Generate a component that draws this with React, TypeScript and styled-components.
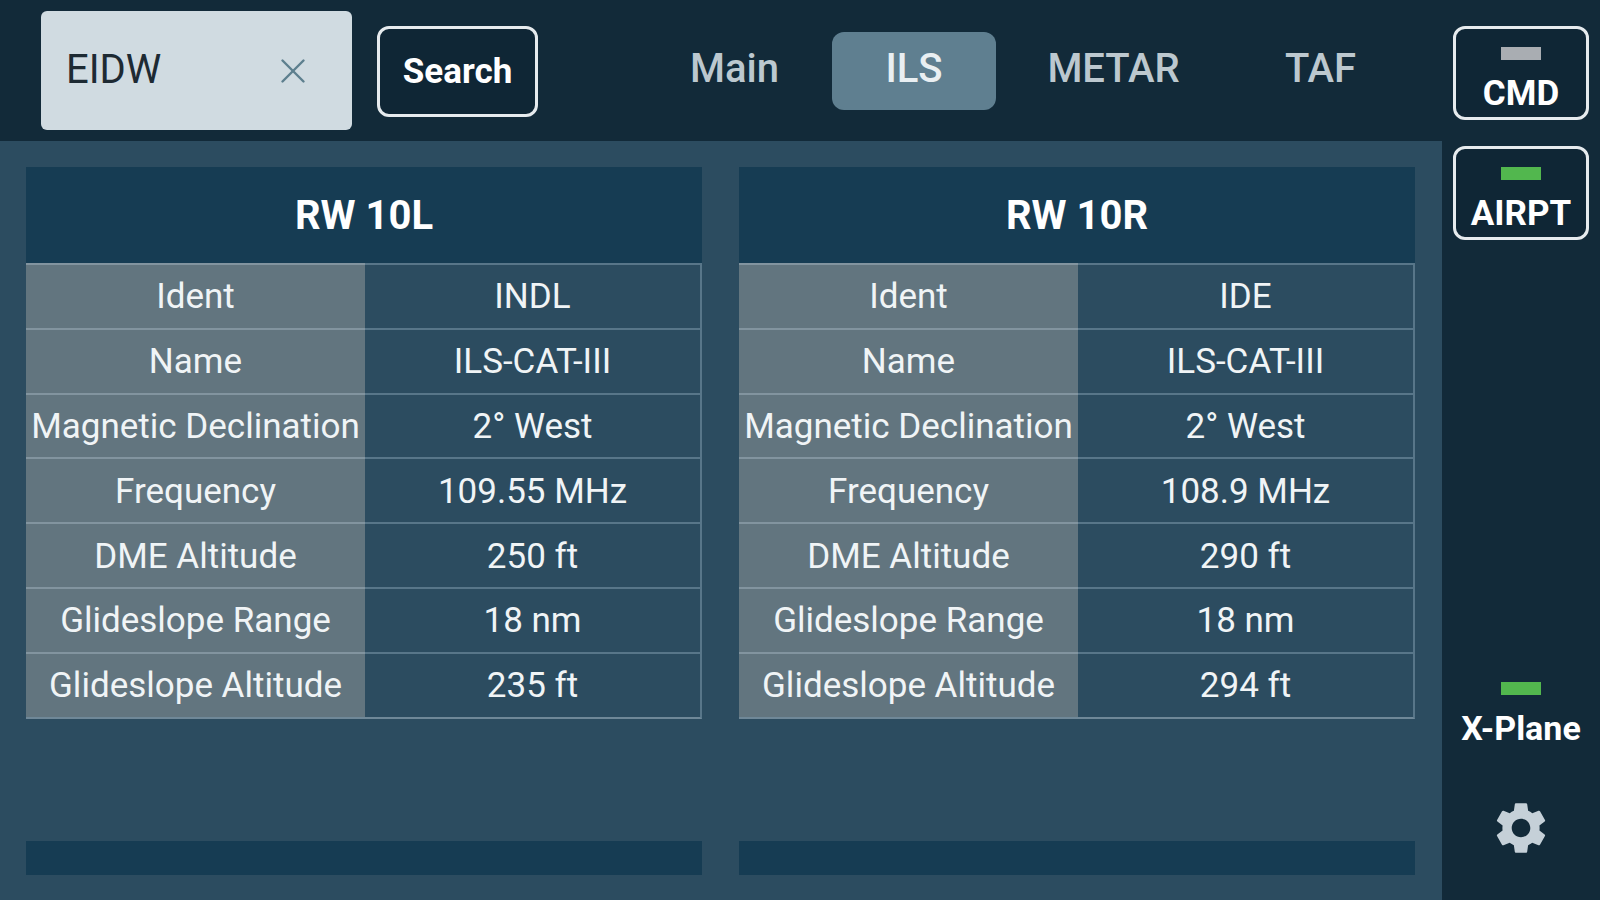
import React from "react";
import styled, { createGlobalStyle } from "styled-components";
import { X } from "lucide-react";
import { MdSettings } from "react-icons/md";

const GlobalStyle = createGlobalStyle`
  html, body {
    margin: 0;
    padding: 0;
    height: 100%;
    overflow: hidden;
    background: #2c4c60;
    font-family: Roboto, "Liberation Sans", sans-serif;
  }
  #root { height: 100%; }
`;

const Screen = styled.div`
  display: grid;
  grid-template-columns: 1442px 158px;
  width: 1600px;
  height: 900px;
`;

const Main = styled.div`
  display: flex;
  flex-direction: column;
  min-width: 0;
`;

const Header = styled.header`
  display: flex;
  align-items: flex-start;
  height: 141px;
  box-sizing: border-box;
  padding: 11px 0 0 41px;
  background: #122a39;
`;

const SearchField = styled.div`
  display: flex;
  align-items: center;
  justify-content: space-between;
  box-sizing: border-box;
  width: 311px;
  height: 119px;
  padding: 0 38px 0 25px;
  border-radius: 6px;
  background: #d0dbe1;
  color: #1d2a33;
  font-size: 40px;
  line-height: 1;
`;

const FieldText = styled.span`
  margin-top: -2px;
`;

const ClearIcon = styled(X)`
  color: #5d7f8e;
`;

const OutlineButton = styled.button`
  box-sizing: border-box;
  border: 3px solid #e6ebee;
  border-radius: 12px;
  background: #0f2635;
  color: #fff;
  font-family: inherit;
  font-weight: 700;
  padding: 0;
`;

const SearchButton = styled(OutlineButton)`
  width: 161px;
  height: 91px;
  margin: 15px 0 0 25px;
  font-size: 35px;
`;

const Tabs = styled.nav`
  display: grid;
  grid-template-columns: 195px 164px 235px 179px;
  margin: 21px 0 0 99px;
`;

const Tab = styled.div<{ $active?: boolean }>`
  display: flex;
  align-items: center;
  justify-content: center;
  height: 78px;
  padding-bottom: 6px;
  box-sizing: border-box;
  border-radius: 12px;
  font-size: 40px;
  font-weight: 500;
  color: ${(p) => (p.$active ? "#e9eff2" : "#bcc8cf")};
  background: ${(p) => (p.$active ? "#5f7f90" : "transparent")};
`;

const Content = styled.main`
  flex: 1;
  display: grid;
  grid-template-columns: 676px 676px;
  column-gap: 37px;
  padding: 26px 0 0 26px;
  background: #2c4c60;
`;

const RunwayPanel = styled.section`
  display: flex;
  flex-direction: column;
  height: 708px;
`;

const RunwayTitle = styled.h2`
  display: flex;
  align-items: center;
  justify-content: center;
  height: 96px;
  margin: 0;
  background: #163c53;
  color: #fff;
  font-size: 40px;
  font-weight: 700;
`;

const InfoTable = styled.div`
  display: grid;
  grid-template-columns: 339px 1fr;
  grid-auto-rows: 64.8px;
  border-right: 2px solid #587689;
  border-bottom: 2px solid #6f8898;
`;

const Cell = styled.div<{ $label?: boolean }>`
  display: flex;
  align-items: center;
  justify-content: center;
  padding-top: 1px;
  box-sizing: border-box;
  white-space: nowrap;
  font-size: 35px;
  color: #f0f4f6;
  border-top: 2px solid ${(p) => (p.$label ? "#82949f" : "#587689")};
  background: ${(p) => (p.$label ? "#62757f" : "#2c4c60")};
`;

const PanelFooter = styled.div`
  height: 34px;
  margin-top: auto;
  background: #163c53;
`;

const Sidebar = styled.aside`
  display: flex;
  flex-direction: column;
  align-items: center;
  box-sizing: border-box;
  padding-top: 26px;
  background: #122a39;
`;

const StatusButton = styled(OutlineButton)`
  display: flex;
  flex-direction: column;
  align-items: center;
  width: 136px;
  height: 94px;
  margin-bottom: 26px;
  padding-top: 18px;
  font-size: 35px;
  line-height: 1;
`;

const Lamp = styled.span<{ $on?: boolean }>`
  display: block;
  flex: none;
  width: 40px;
  height: 13px;
  background: ${(p) => (p.$on ? "#52b74e" : "#a9adb2")};
`;

const ButtonLabel = styled.span`
  margin-top: 16px;
  font-weight: 700;
`;

const ConnectionStatus = styled.div`
  display: flex;
  flex-direction: column;
  align-items: center;
  margin-top: auto;
  color: #fff;
  font-size: 34px;
  font-weight: 700;
  line-height: 1;
`;

const ConnectionLabel = styled.span`
  margin-top: 16px;
`;

const SettingsIcon = styled(MdSettings)`
  display: block;
  margin: 52px 0 41px;
  color: #c5d0d8;
`;

type Runway = {
  name: string;
  ident: string;
  frequency: string;
  dme: string;
  gsAltitude: string;
};

const runways: Runway[] = [
  { name: "RW 10L", ident: "INDL", frequency: "109.55 MHz", dme: "250 ft", gsAltitude: "235 ft" },
  { name: "RW 10R", ident: "IDE", frequency: "108.9 MHz", dme: "290 ft", gsAltitude: "294 ft" },
];

const rowsFor = (r: Runway): [string, string][] => [
  ["Ident", r.ident],
  ["Name", "ILS-CAT-III"],
  ["Magnetic Declination", "2° West"],
  ["Frequency", r.frequency],
  ["DME Altitude", r.dme],
  ["Glideslope Range", "18 nm"],
  ["Glideslope Altitude", r.gsAltitude],
];

const App = () => {
  return (
    <>
      <GlobalStyle />
      <Screen>
        <Main>
          <Header>
            <SearchField>
              <FieldText>EIDW</FieldText>
              <ClearIcon size={42} strokeWidth={1.4} />
            </SearchField>
            <SearchButton>Search</SearchButton>
            <Tabs>
              <Tab>Main</Tab>
              <Tab $active>ILS</Tab>
              <Tab>METAR</Tab>
              <Tab>TAF</Tab>
            </Tabs>
          </Header>
          <Content>
            {runways.map((r) => (
              <RunwayPanel key={r.name}>
                <RunwayTitle>{r.name}</RunwayTitle>
                <InfoTable>
                  {rowsFor(r).map(([label, value]) => (
                    <React.Fragment key={label}>
                      <Cell $label>{label}</Cell>
                      <Cell>{value}</Cell>
                    </React.Fragment>
                  ))}
                </InfoTable>
                <PanelFooter />
              </RunwayPanel>
            ))}
          </Content>
        </Main>
        <Sidebar>
          <StatusButton>
            <Lamp />
            <ButtonLabel>CMD</ButtonLabel>
          </StatusButton>
          <StatusButton>
            <Lamp $on />
            <ButtonLabel>AIRPT</ButtonLabel>
          </StatusButton>
          <ConnectionStatus>
            <Lamp $on />
            <ConnectionLabel>X-Plane</ConnectionLabel>
            <SettingsIcon size={62} />
          </ConnectionStatus>
        </Sidebar>
      </Screen>
    </>
  );
};

export default App;
